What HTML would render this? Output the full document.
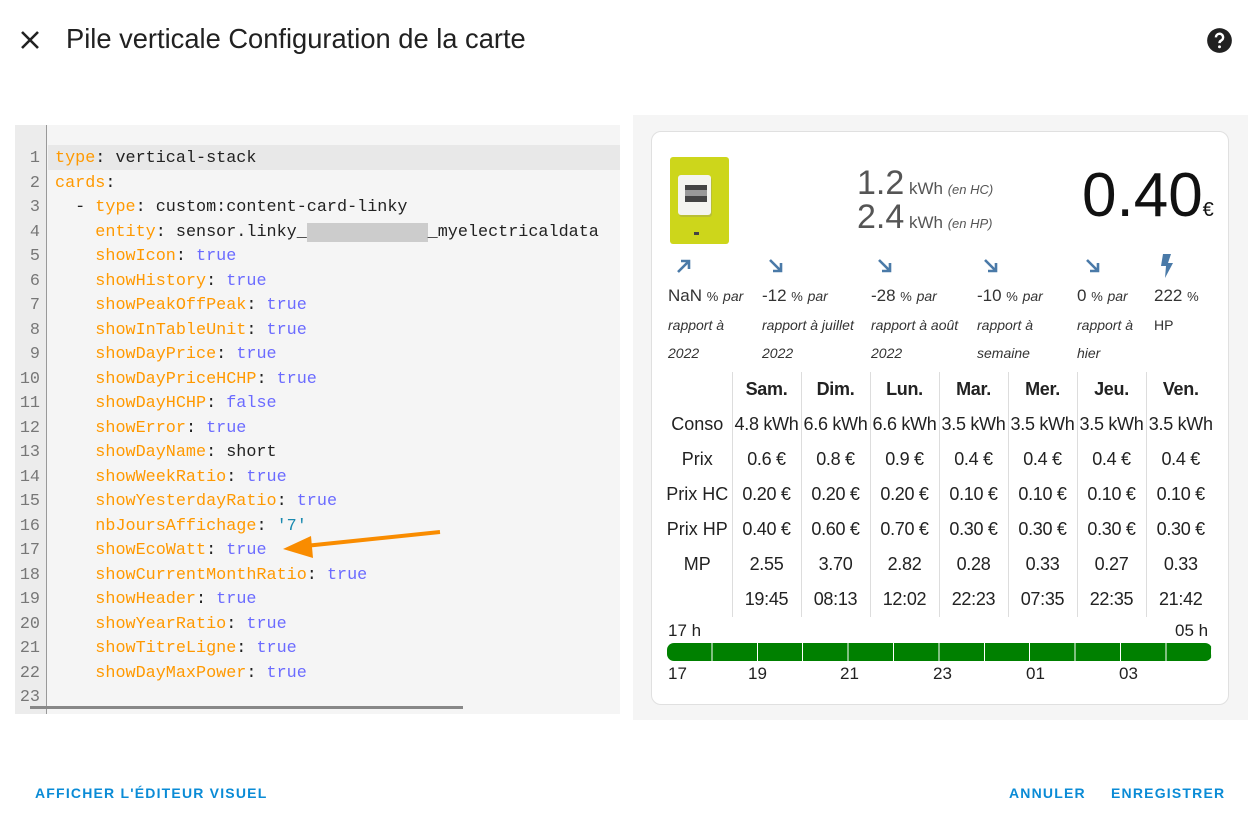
<!DOCTYPE html>
<html><head><meta charset="utf-8"><style>
*{margin:0;padding:0;box-sizing:border-box}
body{width:1252px;height:816px;background:#fff;font-family:"Liberation Sans",sans-serif;color:#212121;position:relative;overflow:hidden}
.abs{position:absolute}
.title{left:66px;top:23px;font-size:27.3px;color:#212121;white-space:nowrap}
.editor{left:15px;top:125px;width:605px;height:589px;background:#f5f5f5;overflow:hidden}
.gutter{left:0;top:0;width:32px;height:589px;background:#ececec;border-right:1px solid #999}
.hl{left:33px;top:20px;width:572px;height:25px;background:#e8e8e8}
.code{font-family:"Liberation Mono",monospace;font-size:16.8px;line-height:24.5px;white-space:pre}
.ln{left:0;top:22px;width:25px;text-align:right;color:#777}
.src{left:40px;top:22px;color:#222}
.k{color:#f90}.t{color:#6b6bff}.s{color:#1a8ab0}
.panel{left:633px;top:115px;width:615px;height:605px;background:#f5f5f5}
.card{left:651px;top:131px;width:578px;height:574px;background:#fff;border:1px solid #e0e0e0;border-radius:10px}
.btn{font-size:14px;font-weight:bold;letter-spacing:1.2px;color:#0a8bd6;top:785px}
.stat{font-size:17px;color:#333;line-height:28px;top:282px;white-space:nowrap}
.stat i{font-size:14px;color:#333}
.stat small{font-size:13px}
table{border-collapse:collapse}
.tb{left:663px;top:372px;font-size:18px;color:#222}
.tb td{height:35px;text-align:center;padding:0;white-space:nowrap}
.tb td.c{border-left:1px solid #ddd;width:69px;letter-spacing:-0.3px}
.tb tr:first-child td{font-weight:bold}
</style></head><body>
<svg class="abs" style="left:20px;top:30px" width="20" height="20" viewBox="0 0 20 20"><path d="M2 2L18 18M18 2L2 18" stroke="#222" stroke-width="2.6"/></svg>
<div class="abs title">Pile verticale Configuration de la carte</div>
<svg class="abs" style="left:1206px;top:27px" width="27" height="27" viewBox="0 0 24 24"><circle cx="12" cy="12" r="11" fill="#212121"/><path d="M8.8 9.2a3.2 3.2 0 1 1 4.6 2.9c-.9.5-1.4 1-1.4 2.2" stroke="#fff" stroke-width="2.2" fill="none"/><circle cx="12" cy="17.6" r="1.3" fill="#fff"/></svg>

<div class="abs editor">
<div class="abs gutter"></div>
<div class="abs hl"></div>
<div class="abs code ln">1
2
3
4
5
6
7
8
9
10
11
12
13
14
15
16
17
18
19
20
21
22
23</div>
<div class="abs code src"><span class="k">type</span>: vertical-stack
<span class="k">cards</span>:
  - <span class="k">type</span>: custom:content-card-linky
    <span class="k">entity</span>: sensor.linky_<span style="background:#ccc;color:transparent">XXXXXXXXXXXX</span>_myelectricaldata
    <span class="k">showIcon</span>: <span class="t">true</span>
    <span class="k">showHistory</span>: <span class="t">true</span>
    <span class="k">showPeakOffPeak</span>: <span class="t">true</span>
    <span class="k">showInTableUnit</span>: <span class="t">true</span>
    <span class="k">showDayPrice</span>: <span class="t">true</span>
    <span class="k">showDayPriceHCHP</span>: <span class="t">true</span>
    <span class="k">showDayHCHP</span>: <span class="t">false</span>
    <span class="k">showError</span>: <span class="t">true</span>
    <span class="k">showDayName</span>: short
    <span class="k">showWeekRatio</span>: <span class="t">true</span>
    <span class="k">showYesterdayRatio</span>: <span class="t">true</span>
    <span class="k">nbJoursAffichage</span>: <span class="s">'7'</span>
    <span class="k">showEcoWatt</span>: <span class="t">true</span>
    <span class="k">showCurrentMonthRatio</span>: <span class="t">true</span>
    <span class="k">showHeader</span>: <span class="t">true</span>
    <span class="k">showYearRatio</span>: <span class="t">true</span>
    <span class="k">showTitreLigne</span>: <span class="t">true</span>
    <span class="k">showDayMaxPower</span>: <span class="t">true</span>
</div>
<div class="abs" style="left:15px;top:581px;width:433px;height:3px;background:#888"></div>
</div>
<svg class="abs" style="left:280px;top:525px" width="165" height="35"><path d="M160 7L25 21" stroke="#f98c00" stroke-width="4"/><path d="M3 24L31 11L33 33Z" fill="#f98c00"/></svg>

<div class="abs panel"></div>
<div class="abs card"></div>
<div class="abs" style="left:670px;top:157px;width:59px;height:87px;background:#cdd61b;border-radius:3px"></div>
<div class="abs" style="left:678px;top:175px;width:33px;height:40px;background:#f4f4f0;border-radius:3px;box-shadow:1px 2px 0 #b9bf35"></div>
<div class="abs" style="left:685px;top:185px;width:22px;height:5px;background:#444"></div>
<div class="abs" style="left:685px;top:190px;width:22px;height:6px;background:#999"></div>
<div class="abs" style="left:685px;top:196px;width:22px;height:6px;background:#444"></div>
<div class="abs" style="left:694px;top:232px;width:5px;height:3px;background:#444"></div>

<div class="abs" style="left:857px;top:165px;font-size:34px;color:#555;line-height:36px;white-space:nowrap">1.2<span style="font-size:17px;color:#555"> kWh <i style="font-size:13px">(en HC)</i></span></div>
<div class="abs" style="left:857px;top:199px;font-size:34px;color:#555;line-height:36px;white-space:nowrap">2.4<span style="font-size:17px;color:#555"> kWh <i style="font-size:13px">(en HP)</i></span></div>
<div class="abs" style="left:1082px;top:160px;font-size:62px;color:#111;line-height:72px;white-space:nowrap">0.40<span style="font-size:20px">€</span></div>

<svg class="abs" style="left:675px;top:258px" width="18" height="16" viewBox="0 0 18 16"><path d="M3 14L14 3M6 3H14V11" stroke="#4a7aa8" stroke-width="2.6" fill="none"/></svg>
<svg class="abs" style="left:767px;top:258px" width="18" height="16" viewBox="0 0 18 16"><path d="M3 2L14 13M14 5V13H6" stroke="#4a7aa8" stroke-width="2.6" fill="none"/></svg>
<svg class="abs" style="left:876px;top:258px" width="18" height="16" viewBox="0 0 18 16"><path d="M3 2L14 13M14 5V13H6" stroke="#4a7aa8" stroke-width="2.6" fill="none"/></svg>
<svg class="abs" style="left:982px;top:258px" width="18" height="16" viewBox="0 0 18 16"><path d="M3 2L14 13M14 5V13H6" stroke="#4a7aa8" stroke-width="2.6" fill="none"/></svg>
<svg class="abs" style="left:1084px;top:258px" width="18" height="16" viewBox="0 0 18 16"><path d="M3 2L14 13M14 5V13H6" stroke="#4a7aa8" stroke-width="2.6" fill="none"/></svg>
<svg class="abs" style="left:1160px;top:254px" width="14" height="24" viewBox="0 0 14 24"><path d="M3 0H11L8 9H13L5 24L6 12H1Z" fill="#4a7aa8"/></svg>

<div class="abs stat" style="left:668px">NaN <small>%</small> <i>par<br>rapport à<br>2022</i></div>
<div class="abs stat" style="left:762px">-12 <small>%</small> <i>par<br>rapport à juillet<br>2022</i></div>
<div class="abs stat" style="left:871px">-28 <small>%</small> <i>par<br>rapport à août<br>2022</i></div>
<div class="abs stat" style="left:977px">-10 <small>%</small> <i>par<br>rapport à<br>semaine</i></div>
<div class="abs stat" style="left:1077px">0 <small>%</small> <i>par<br>rapport à<br>hier</i></div>
<div class="abs stat" style="left:1154px">222 <small>%</small><br><span style="font-size:14px">HP</span></div>

<table class="abs tb">
<tr><td style="width:69px"></td><td class="c">Sam.</td><td class="c">Dim.</td><td class="c">Lun.</td><td class="c">Mar.</td><td class="c">Mer.</td><td class="c">Jeu.</td><td class="c">Ven.</td></tr>
<tr><td>Conso</td><td class="c">4.8 kWh</td><td class="c">6.6 kWh</td><td class="c">6.6 kWh</td><td class="c">3.5 kWh</td><td class="c">3.5 kWh</td><td class="c">3.5 kWh</td><td class="c">3.5 kWh</td></tr>
<tr><td>Prix</td><td class="c">0.6 €</td><td class="c">0.8 €</td><td class="c">0.9 €</td><td class="c">0.4 €</td><td class="c">0.4 €</td><td class="c">0.4 €</td><td class="c">0.4 €</td></tr>
<tr><td>Prix HC</td><td class="c">0.20 €</td><td class="c">0.20 €</td><td class="c">0.20 €</td><td class="c">0.10 €</td><td class="c">0.10 €</td><td class="c">0.10 €</td><td class="c">0.10 €</td></tr>
<tr><td>Prix HP</td><td class="c">0.40 €</td><td class="c">0.60 €</td><td class="c">0.70 €</td><td class="c">0.30 €</td><td class="c">0.30 €</td><td class="c">0.30 €</td><td class="c">0.30 €</td></tr>
<tr><td>MP</td><td class="c">2.55</td><td class="c">3.70</td><td class="c">2.82</td><td class="c">0.28</td><td class="c">0.33</td><td class="c">0.27</td><td class="c">0.33</td></tr>
<tr><td></td><td class="c">19:45</td><td class="c">08:13</td><td class="c">12:02</td><td class="c">22:23</td><td class="c">07:35</td><td class="c">22:35</td><td class="c">21:42</td></tr>
</table>

<div class="abs" style="left:668px;top:621px;font-size:17px">17 h</div>
<div class="abs" style="left:1175px;top:621px;font-size:17px">05 h</div>
<div class="abs" style="left:667px;top:643px;width:545px;height:18px;background:#008000;border-radius:7px;overflow:hidden">
<div style="position:absolute;left:0;top:0;width:100%;height:100%;background-image:repeating-linear-gradient(90deg,transparent 0,transparent 44.4px,#fff 44.4px,#fff 45.4px)"></div></div>
<div class="abs" style="left:668px;top:664px;font-size:17px">17</div>
<div class="abs" style="left:748px;top:664px;font-size:17px">19</div>
<div class="abs" style="left:840px;top:664px;font-size:17px">21</div>
<div class="abs" style="left:933px;top:664px;font-size:17px">23</div>
<div class="abs" style="left:1026px;top:664px;font-size:17px">01</div>
<div class="abs" style="left:1119px;top:664px;font-size:17px">03</div>

<div class="abs btn" style="left:35px">AFFICHER L'ÉDITEUR VISUEL</div>
<div class="abs btn" style="left:1009px">ANNULER</div>
<div class="abs btn" style="left:1111px">ENREGISTRER</div>
</body></html>
